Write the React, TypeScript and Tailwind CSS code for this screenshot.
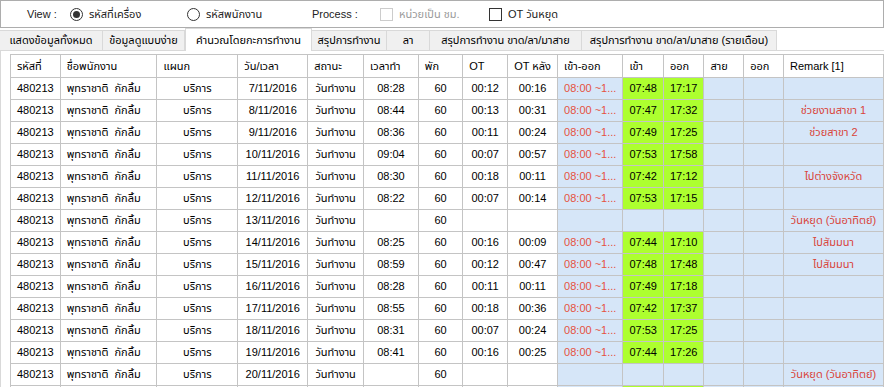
import React from 'react';

type Row = {
    date: string;
    work: string;
    ot: string;
    otAfter: string;
    inTime: string;
    outTime: string;
    remark: string;
    partial?: boolean;
};

const rows: Row[] = [
    { date: '7/11/2016', work: '08:28', ot: '00:12', otAfter: '00:16', inTime: '07:48', outTime: '17:17', remark: '' },
    { date: '8/11/2016', work: '08:44', ot: '00:13', otAfter: '00:31', inTime: '07:47', outTime: '17:32', remark: 'ช่วยงานสาขา 1' },
    { date: '9/11/2016', work: '08:36', ot: '00:11', otAfter: '00:24', inTime: '07:49', outTime: '17:25', remark: 'ช่วยสาขา 2' },
    { date: '10/11/2016', work: '09:04', ot: '00:07', otAfter: '00:57', inTime: '07:53', outTime: '17:58', remark: '' },
    { date: '11/11/2016', work: '08:30', ot: '00:18', otAfter: '00:11', inTime: '07:42', outTime: '17:12', remark: 'ไปต่างจังหวัด' },
    { date: '12/11/2016', work: '08:22', ot: '00:07', otAfter: '00:14', inTime: '07:53', outTime: '17:15', remark: '' },
    { date: '13/11/2016', work: '', ot: '', otAfter: '', inTime: '', outTime: '', remark: 'วันหยุด (วันอาทิตย์)' },
    { date: '14/11/2016', work: '08:25', ot: '00:16', otAfter: '00:09', inTime: '07:44', outTime: '17:10', remark: 'ไปสัมมนา' },
    { date: '15/11/2016', work: '08:59', ot: '00:12', otAfter: '00:47', inTime: '07:48', outTime: '17:48', remark: 'ไปสัมมนา' },
    { date: '16/11/2016', work: '08:28', ot: '00:11', otAfter: '00:11', inTime: '07:49', outTime: '17:18', remark: '' },
    { date: '17/11/2016', work: '08:55', ot: '00:18', otAfter: '00:36', inTime: '07:42', outTime: '17:37', remark: '' },
    { date: '18/11/2016', work: '08:31', ot: '00:07', otAfter: '00:24', inTime: '07:53', outTime: '17:25', remark: '' },
    { date: '19/11/2016', work: '08:41', ot: '00:16', otAfter: '00:25', inTime: '07:44', outTime: '17:26', remark: '' },
    { date: '20/11/2016', work: '', ot: '', otAfter: '', inTime: '', outTime: '', remark: 'วันหยุด (วันอาทิตย์)' },
    // next row only peeks in at the bottom edge, so its text is out of view
    { date: '21/11/2016', work: '', ot: '', otAfter: '', inTime: '', outTime: '', remark: '', partial: true },
];

const colWidths = [48, 97, 82, 70, 56, 55, 45, 45, 50, 64, 40, 40, 40, 40, 100];
const headers = ['รหัสที่', 'ชื่อพนักงาน', 'แผนก', 'วัน/เวลา', 'สถานะ', 'เวลาทำ', 'พัก', 'OT', 'OT หลัง', 'เข้า-ออก', 'เข้า', 'ออก', 'สาย', 'ออก', 'Remark [1]'];

const tabs = [
    { label: 'แสดงข้อมูลทั้งหมด', w: 'w-[103px]' },
    { label: 'ข้อมูลดูแบบง่าย', w: 'w-[82px]' },
    { label: 'คำนวณโดยกะการทำงาน', w: 'w-[127px]', active: true },
    { label: 'สรุปการทำงาน', w: 'w-[75px]' },
    { label: 'ลา', w: 'w-[43px]' },
    { label: 'สรุปการทำงาน ขาด/ลา/มาสาย', w: 'w-[152px]' },
    { label: 'สรุปการทำงาน ขาด/ลา/มาสาย (รายเดือน)', w: 'w-[195px]' },
];

const Radio = ({ checked }: { checked?: boolean }) => (
    <span className="w-[13px] h-[13px] rounded-full border border-[#333] bg-white flex items-center justify-center">
        {checked && <span className="w-[7px] h-[7px] rounded-full bg-[#333]" />}
    </span>
);

const Check = ({ disabled }: { disabled?: boolean }) => (
    <span className={disabled ? 'w-[13px] h-[13px] border border-[#cccccc] bg-white' : 'w-[13px] h-[13px] border border-[#333] bg-white'} />
);

const td = 'border border-[#c4c4c4] h-[22px] px-[6px] whitespace-nowrap overflow-hidden';

export default function App() {
    return (
        <div className="w-[884px] h-[387px] overflow-hidden bg-white text-[11px] text-black font-['Liberation_Sans','Noto_Sans_Thai','Noto_Sans',sans-serif]">
            <div className="h-[28px] border border-[#adadad] flex items-center text-[#222]">
                <span className="ml-[26px] w-[43px]">View :</span>
                <span className="flex items-center gap-[6px] w-[117px]"><Radio checked />รหัสที่เครื่อง</span>
                <span className="flex items-center gap-[6px] w-[125px]"><Radio />รหัสพนักงาน</span>
                <span className="w-[68px]">Process :</span>
                <span className="flex items-center gap-[6px] w-[109px] text-[#9a9a9a]"><Check disabled />หน่วยเป็น ชม.</span>
                <span className="flex items-center gap-[6px]"><Check />OT วันหยุด</span>
            </div>

            <div className="h-[23px] flex items-end border-b border-[#d9d9d9]">
                {tabs.map(t => (
                    <div
                        key={t.label}
                        className={t.active
                            ? `${t.w} h-[23px] bg-white border border-b-0 border-[#d9d9d9] flex items-center justify-center whitespace-nowrap -mb-px`
                            : `${t.w} h-[20px] bg-[#f0f0f0] border-r border-t border-[#d9d9d9] flex items-center justify-center whitespace-nowrap`}
                    >
                        {t.label}
                    </div>
                ))}
            </div>

            <div className="border-l border-[#d9d9d9] bg-white pl-[9px] pt-[3px]">
                <table className="table-fixed border-collapse border border-[#a0a0a0]">
                    <colgroup>
                        {colWidths.map((w, i) => <col key={i} style={{ width: w }} />)}
                    </colgroup>
                    <thead>
                        <tr>
                            {headers.map((h, i) => (
                                <th key={i} className="border border-[#c4c4c4] h-[23px] px-[6px] text-left font-normal whitespace-nowrap">{h}</th>
                            ))}
                        </tr>
                    </thead>
                    <tbody>
                        {rows.map(r => {
                            const worked = r.inTime !== '' || r.partial;
                            const show = !r.partial;
                            return (
                                <tr key={r.date}>
                                    <td className={td}>{show && '480213'}</td>
                                    <td className={td}>{show && <>พุทราชาติ&nbsp; กักลิ้ม</>}</td>
                                    <td className={`${td} text-center`}>{show && 'บริการ'}</td>
                                    <td className={`${td} text-center`}>{show && r.date}</td>
                                    <td className={`${td} text-center`}>{show && 'วันทำงาน'}</td>
                                    <td className={`${td} text-center`}>{r.work}</td>
                                    <td className={`${td} text-center`}>{show && '60'}</td>
                                    <td className={`${td} text-center`}>{r.ot}</td>
                                    <td className={`${td} text-center`}>{r.otAfter}</td>
                                    <td className={`${td} bg-[#d6e6f8] text-[#e5523f]`}>{worked && show ? '08:00 ~1...' : ''}</td>
                                    <td className={`${td} text-center ${worked ? 'bg-[#adff2f]' : 'bg-[#d6e6f8]'}`}>{r.inTime}</td>
                                    <td className={`${td} text-center ${worked ? 'bg-[#adff2f]' : 'bg-[#d6e6f8]'}`}>{r.outTime}</td>
                                    <td className={`${td} bg-[#d6e6f8]`} />
                                    <td className={`${td} bg-[#d6e6f8]`} />
                                    <td className={`${td} bg-[#d6e6f8] text-center text-[#d9443a]`}>{r.remark}</td>
                                </tr>
                            );
                        })}
                    </tbody>
                </table>
            </div>
        </div>
    );
}
